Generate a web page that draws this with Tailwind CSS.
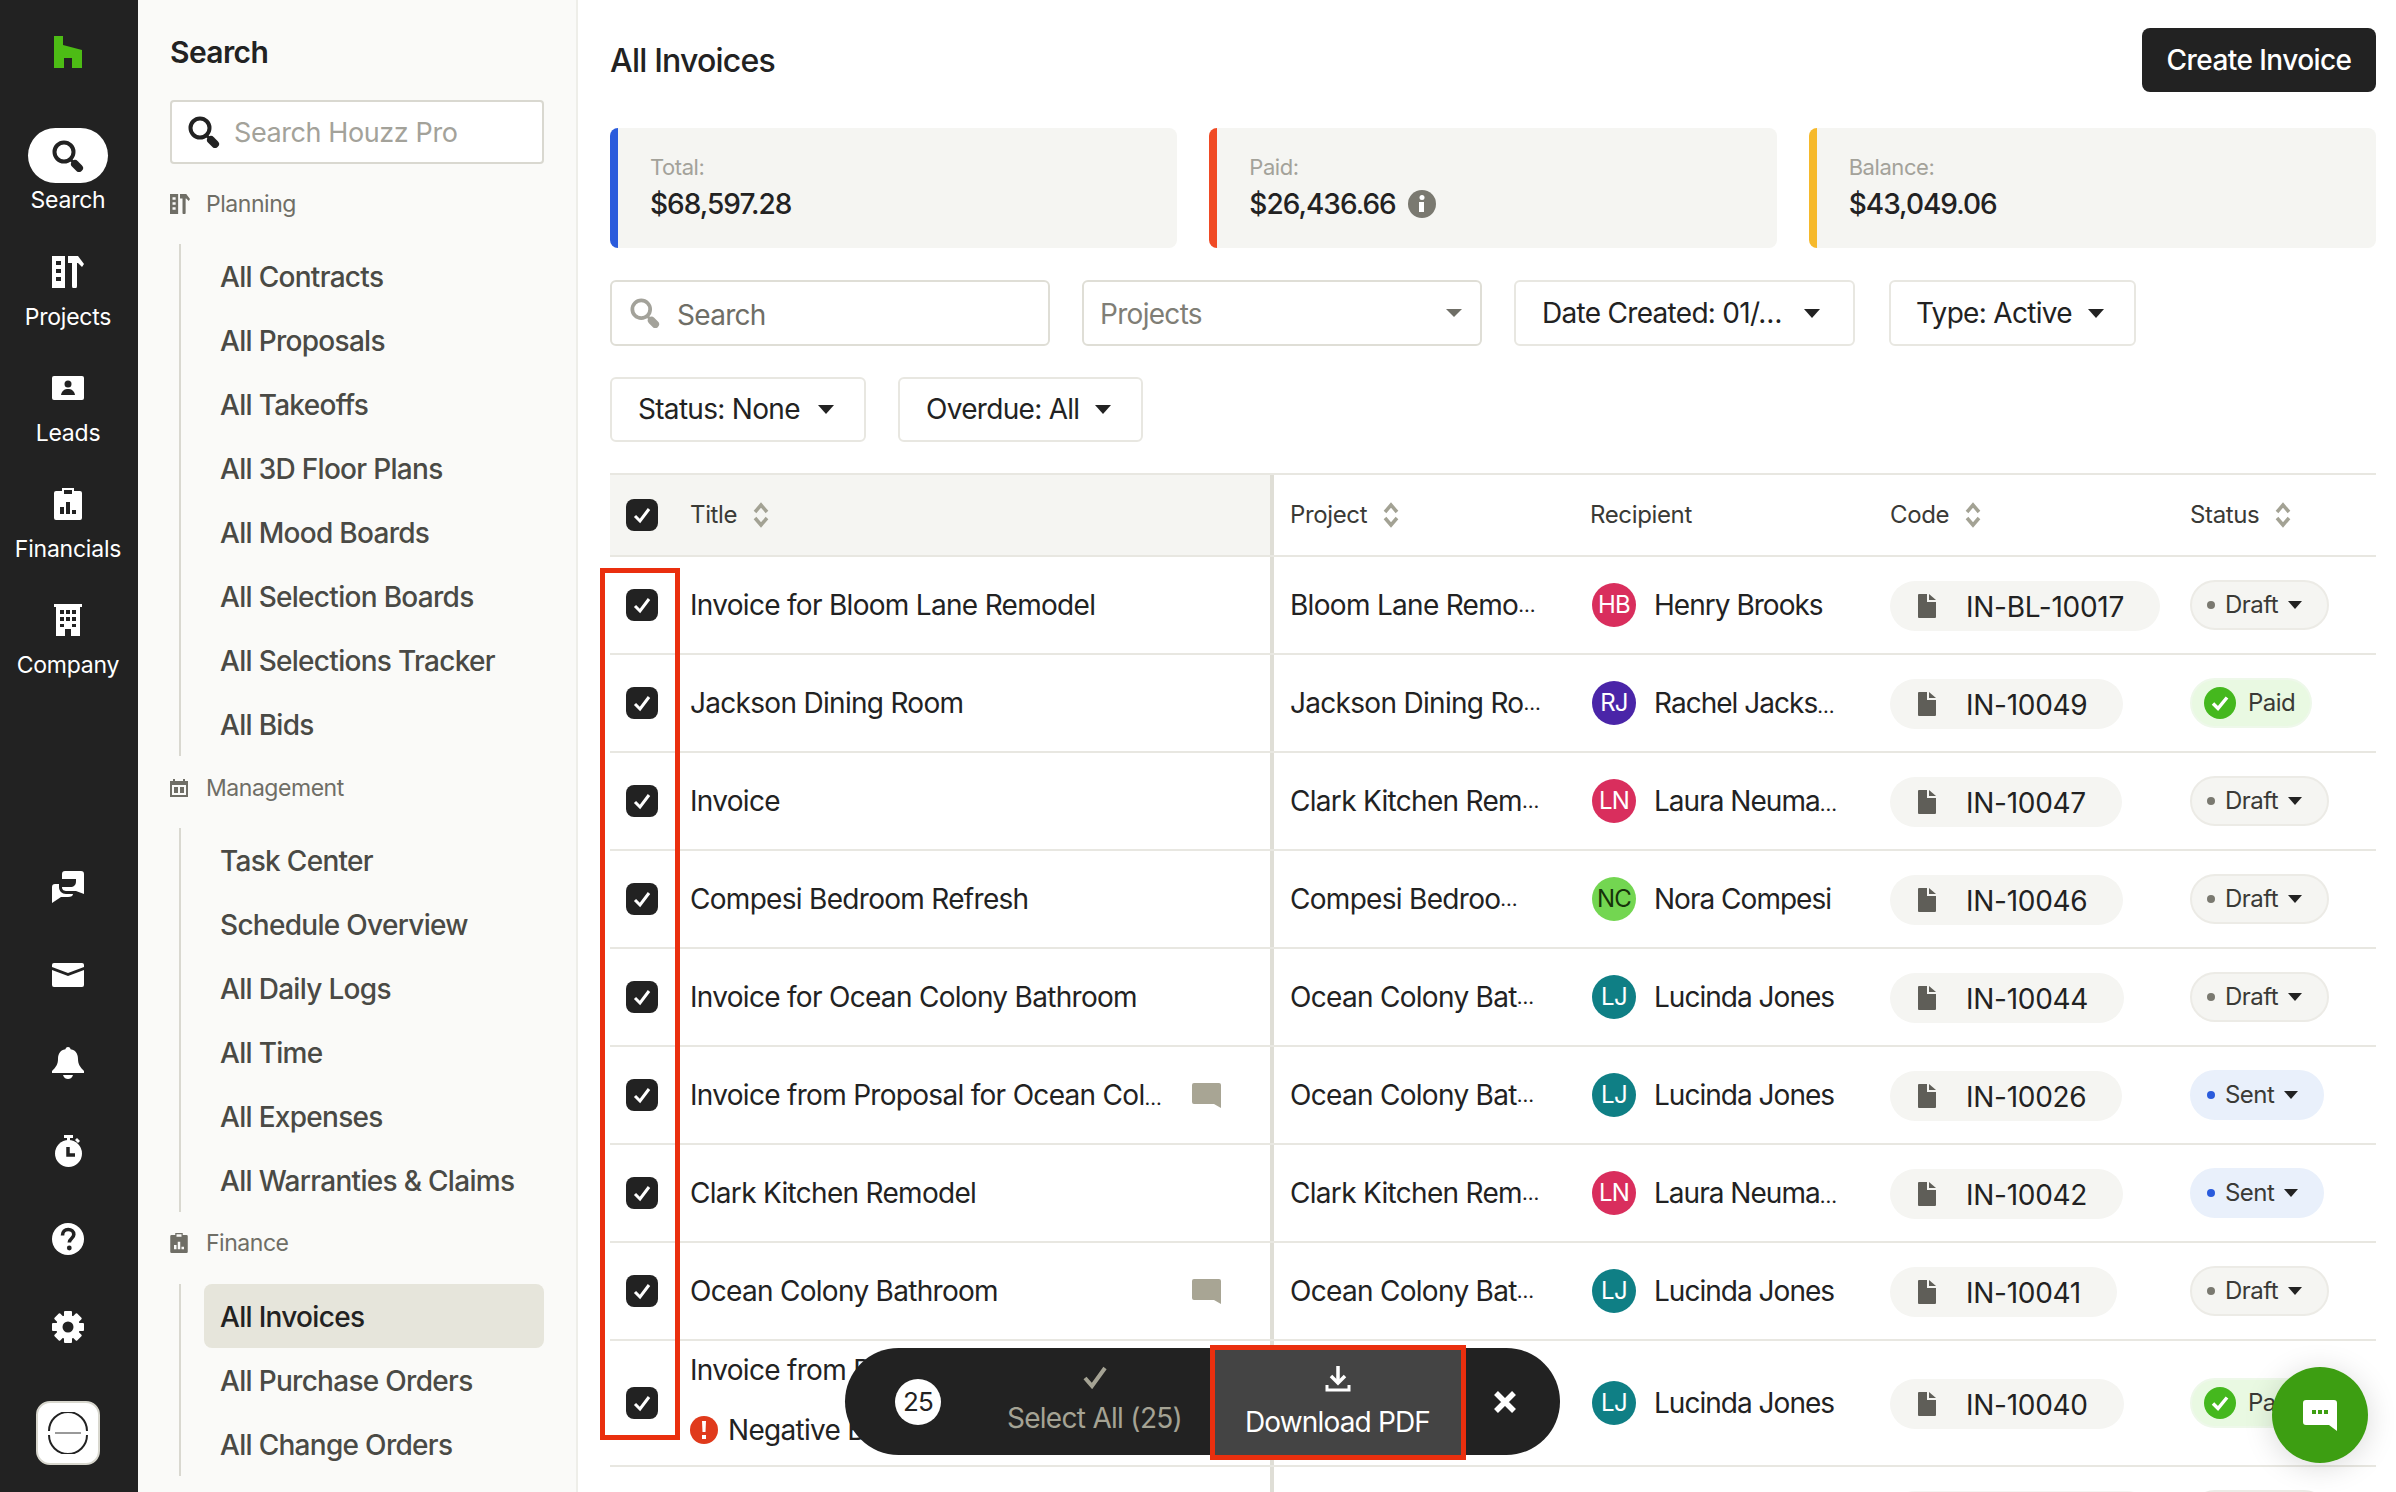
<!DOCTYPE html>
<html lang="en">
<head>
    <meta charset="UTF-8">
    <title>All Invoices</title>
    <script src="https://cdn.jsdelivr.net/npm/@tailwindcss/browser@4"></script>
</head>
<body class="font-['Inter',sans-serif] text-[#222222] bg-white">
<div class="relative flex w-[2396px] h-[1492px] overflow-hidden">

    <!-- icon rail -->
    <aside class="w-[138px] shrink-0 h-full bg-[#222222] flex flex-col items-center text-white pr-[2px]">
        <svg class="mt-[36px] w-[28px] h-[32px]" viewBox="0 0 28 32"><path fill="#4dbc15" d="M0 0h9v9l19 5v18H18V22H10v10H0z"/></svg>
        <div class="mt-[60px] w-full flex flex-col items-center h-[116px]">
            <div class="w-[80px] h-[55px] bg-white rounded-full flex items-center justify-center">
                <svg class="w-[32px] h-[32px]" viewBox="0 0 32 32"><circle cx="12" cy="12" r="9.500" fill="none" stroke="#222" stroke-width="4"/><path d="M18 19l4 4" stroke="#222" stroke-width="3"/><path d="M23 24l4 4" stroke="#222" stroke-width="8" stroke-linecap="round"/></svg>
            </div>
            <span class="mt-[1px] h-[32px] leading-[32px] text-[23px] tracking-[-0.01em]">Search</span>
        </div>
        <div class="w-full flex flex-col items-center h-[116px]">
            <div class="h-[55px] flex items-center justify-center">
                <svg class="w-[32px] h-[32px]" viewBox="0 0 32 32" fill="#fff"><path fill-rule="evenodd" d="M0 0h13v32H0zM4 5v4h5V5zm0 8v4h5v-4zm0 8v4h5v-4z"/><path d="M16 0h10l6 8-2 3-4-4h-1v23a2 2 0 0 1-5 0V7h-4z"/></svg>
            </div>
            <span class="mt-[2px] h-[32px] leading-[32px] text-[23px] tracking-[-0.01em]">Projects</span>
        </div>
        <div class="w-full flex flex-col items-center h-[116px]">
            <div class="h-[55px] flex items-center justify-center">
                <svg class="w-[32px] h-[24px]" viewBox="0 0 32 24"><rect width="32" height="24" rx="2" fill="#fff"/><circle cx="16" cy="8" r="3.500" fill="#222"/><path d="M9 19c1-5 4-6 7-6s6 1 7 6z" fill="#222"/></svg>
            </div>
            <span class="mt-[2px] h-[32px] leading-[32px] text-[23px] tracking-[-0.01em]">Leads</span>
        </div>
        <div class="w-full flex flex-col items-center h-[116px]">
            <div class="h-[55px] flex items-center justify-center">
                <svg class="w-[28px] h-[32px]" viewBox="0 0 28 32" fill="#fff"><path fill-rule="evenodd" d="M8 0h12v3h6a2 2 0 0 1 2 2v25a2 2 0 0 1-2 2H2a2 2 0 0 1-2-2V5a2 2 0 0 1 2-2h6zm2 2v4h8V2zM6 19v7h4v-7zm6-5v12h4V14zm6 8v4h4v-4z"/></svg>
            </div>
            <span class="mt-[2px] h-[32px] leading-[32px] text-[23px] tracking-[-0.01em]">Financials</span>
        </div>
        <div class="w-full flex flex-col items-center h-[116px]">
            <div class="h-[55px] flex items-center justify-center">
                <svg class="w-[28px] h-[32px]" viewBox="0 0 28 32" fill="#fff"><path fill-rule="evenodd" d="M0 0h28v3h-2v29H17v-7h-6v7H2V3H0zM6 6v4h4V6zm6 0v4h4V6zm6 0v4h4V6zM6 13v4h4v-4zm6 0v4h4v-4zm6 0v4h4v-4zM6 20v3h4v-3zm12 0v3h4v-3z"/></svg>
            </div>
            <span class="mt-[2px] h-[32px] leading-[32px] text-[23px] tracking-[-0.01em]">Company</span>
        </div>

        <div class="mt-auto flex flex-col items-center pb-[27px]">
            <div class="h-[88px] flex items-center">
                <svg class="w-[32px] h-[32px]" viewBox="0 0 32 32" fill="#fff"><path d="M10 3a3 3 0 0 1 3-3h16a3 3 0 0 1 3 3v20l-8-3H15c-3 0-5-1-5-4h8c4 0 6-2 6-6V8H10z"/><path d="M0 16a3 3 0 0 1 3-3h4v3c0 4 3 7 7 7h7c0 2-2 3-5 3H9l-9 6z"/></svg>
            </div>
            <div class="h-[88px] flex items-center">
                <svg class="w-[32px] h-[24px]" viewBox="0 0 32 24" fill="#fff"><path d="M0 2a2 2 0 0 1 2-2h28a2 2 0 0 1 2 2v2L16 10 0 4z"/><path d="M0 7l16 6 16-6v15a2 2 0 0 1-2 2H2a2 2 0 0 1-2-2z"/></svg>
            </div>
            <div class="h-[88px] flex items-center">
                <svg class="w-[32px] h-[32px]" viewBox="0 0 32 32" fill="#fff"><circle cx="16" cy="2.500" r="2.500"/><path d="M16 2c7 0 10 4 10 10 0 5 2 8 6 12v2H0v-2c4-4 6-7 6-12 0-6 3-10 10-10z"/><path d="M11 28h10c-1 3-3 4-5 4s-4-1-5-4z"/></svg>
            </div>
            <div class="h-[88px] flex items-center">
                <svg class="w-[27px] h-[32px]" viewBox="0 0 27 32"><path d="M9 0h9v3h-3v4h-3V3H9z" fill="#fff"/><path d="M22 3l3 3-2 2-3-3z" fill="#fff"/><circle cx="13.500" cy="18.500" r="13.500" fill="#fff"/><path d="M13 12v8h7" fill="none" stroke="#222" stroke-width="3.500"/></svg>
            </div>
            <div class="h-[88px] flex items-center">
                <svg class="w-[32px] h-[32px]" viewBox="0 0 32 32"><circle cx="16" cy="16" r="16" fill="#fff"/><path d="M10.500 12.500c0-4 2.500-6 5.700-6s5.600 2 5.600 5c0 4-4.500 4-4.500 8" fill="none" stroke="#222" stroke-width="3.600"/><circle cx="17.300" cy="25" r="2.400" fill="#222"/></svg>
            </div>
            <div class="h-[88px] flex items-center">
                <svg class="w-[32px] h-[32px]" viewBox="0 0 32 32"><g fill="#fff"><rect x="12" y="0" width="8" height="32" rx="1"/><rect x="12" y="0" width="8" height="32" rx="1" transform="rotate(45 16 16)"/><rect x="12" y="0" width="8" height="32" rx="1" transform="rotate(90 16 16)"/><rect x="12" y="0" width="8" height="32" rx="1" transform="rotate(135 16 16)"/><circle cx="16" cy="16" r="12"/></g><circle cx="16" cy="16" r="5.500" fill="#222"/></svg>
            </div>
            <div class="mt-[30px] w-[64px] h-[64px] bg-white rounded-[14px] border-2 border-[#d8d7ce] flex items-center justify-center">
                <svg class="w-[42px] h-[42px]" viewBox="0 0 42 42"><path d="M2 19a19 19 0 0 1 38 0M40 23a19 19 0 0 1-38 0" fill="none" stroke="#222" stroke-width="2"/><rect x="8" y="20" width="26" height="2" fill="#999"/></svg>
            </div>
        </div>
    </aside>

    <!-- secondary nav -->
    <nav class="w-[440px] shrink-0 h-full bg-[#fafaf8] border-r-2 border-[#eeeee9] pl-[32px] pr-[32px] overflow-hidden">
        <h2 class="mt-[32px] h-[40px] leading-[40px] text-[30px] font-semibold tracking-[-0.02em]">Search</h2>
        <div class="mt-[28px] h-[64px] bg-white border-2 border-[#d9d8d0] rounded-[4px] flex items-center pl-[16px]">
            <svg class="w-[32px] h-[32px] shrink-0" viewBox="0 0 32 32"><circle cx="12" cy="12" r="9.500" fill="none" stroke="#222" stroke-width="4"/><path d="M18 19l4 4" stroke="#222" stroke-width="3"/><path d="M23 24l4 4" stroke="#222" stroke-width="8" stroke-linecap="round"/></svg>
            <span class="ml-[14px] mt-[2px] text-[27px] text-[#a3a29a] tracking-[-0.015em]">Search Houzz Pro</span>
        </div>

        <div class="mt-[20px] h-[40px] flex items-center text-[23px] text-[#6f6e66] tracking-[-0.02em]">
            <svg class="w-[20px] h-[20px] mr-[16px]" viewBox="0 0 32 32" fill="#6f6e66"><path fill-rule="evenodd" d="M0 0h13v32H0zM4 5v4h5V5zm0 8v4h5v-4zm0 8v4h5v-4z"/><path d="M16 0h10l6 8-2 3-4-4h-1v23a2 2 0 0 1-5 0V7h-4z"/></svg>
            Planning
        </div>
        <ul class="mt-[20px] ml-[9px] border-l-2 border-[#d9d8d0] text-[28px] font-medium text-[#4a4a45] tracking-[-0.025em]">
            <li class="h-[64px] leading-[66px] ml-[23px] pl-[16px]">All Contracts</li>
            <li class="h-[64px] leading-[66px] ml-[23px] pl-[16px]">All Proposals</li>
            <li class="h-[64px] leading-[66px] ml-[23px] pl-[16px]">All Takeoffs</li>
            <li class="h-[64px] leading-[66px] ml-[23px] pl-[16px]">All 3D Floor Plans</li>
            <li class="h-[64px] leading-[66px] ml-[23px] pl-[16px]">All Mood Boards</li>
            <li class="h-[64px] leading-[66px] ml-[23px] pl-[16px]">All Selection Boards</li>
            <li class="h-[64px] leading-[66px] ml-[23px] pl-[16px]">All Selections Tracker</li>
            <li class="h-[64px] leading-[66px] ml-[23px] pl-[16px]">All Bids</li>
        </ul>

        <div class="mt-[12px] h-[40px] flex items-center text-[23px] text-[#6f6e66] tracking-[-0.02em]">
            <svg class="w-[18px] h-[18px] mr-[18px]" viewBox="0 0 18 18" fill="#6f6e66"><path fill-rule="evenodd" d="M3 0h2v2h8V0h2v2h3v16H0V2h3zM2 6v10h14V6z"/><path d="M4 8h4v6H4zm6 0h4v6h-4z"/></svg>
            Management
        </div>
        <ul class="mt-[20px] ml-[9px] border-l-2 border-[#d9d8d0] text-[28px] font-medium text-[#4a4a45] tracking-[-0.025em]">
            <li class="h-[64px] leading-[66px] ml-[23px] pl-[16px]">Task Center</li>
            <li class="h-[64px] leading-[66px] ml-[23px] pl-[16px]">Schedule Overview</li>
            <li class="h-[64px] leading-[66px] ml-[23px] pl-[16px]">All Daily Logs</li>
            <li class="h-[64px] leading-[66px] ml-[23px] pl-[16px]">All Time</li>
            <li class="h-[64px] leading-[66px] ml-[23px] pl-[16px]">All Expenses</li>
            <li class="h-[64px] leading-[66px] ml-[23px] pl-[16px]">All Warranties &amp; Claims</li>
        </ul>

        <div class="mt-[11px] h-[40px] flex items-center text-[23px] text-[#6f6e66] tracking-[-0.02em]">
            <svg class="w-[18px] h-[20px] mr-[18px]" viewBox="0 0 28 32" fill="#6f6e66"><path fill-rule="evenodd" d="M8 0h12v3h6a2 2 0 0 1 2 2v25a2 2 0 0 1-2 2H2a2 2 0 0 1-2-2V5a2 2 0 0 1 2-2h6zm2 2v4h8V2zM6 19v7h4v-7zm6-5v12h4V14zm6 8v4h4v-4z"/></svg>
            Finance
        </div>
        <ul class="mt-[21px] ml-[9px] border-l-2 border-[#d9d8d0] text-[28px] font-medium text-[#4a4a45] tracking-[-0.025em]">
            <li class="h-[64px] leading-[66px] ml-[23px] pl-[16px] bg-[#e6e5db] rounded-[8px] text-[#222222]">All Invoices</li>
            <li class="h-[64px] leading-[66px] ml-[23px] pl-[16px]">All Purchase Orders</li>
            <li class="h-[64px] leading-[66px] ml-[23px] pl-[16px]">All Change Orders</li>
        </ul>
    </nav>

    <!-- main -->
    <main class="flex-1 min-w-0 pl-[32px] pr-[20px] overflow-hidden">
        <div class="mt-[28px] h-[64px] flex items-center justify-between">
            <h1 class="mt-[2px] text-[32px] font-medium tracking-[-0.025em]">All Invoices</h1>
            <button class="w-[234px] h-[64px] bg-[#222222] text-white rounded-[8px] text-[28px] font-medium tracking-[-0.02em]">Create Invoice</button>
        </div>

        <div class="mt-[36px] grid grid-cols-3 gap-[32px]">
            <div class="h-[120px] bg-[#f5f5f2] rounded-[8px] border-l-[8px] border-[#2a5bdc] pl-[32px] pt-[24px]">
                <div class="h-[30px] leading-[30px] text-[22px] text-[#a3a29a] tracking-[-0.02em]">Total:</div>
                <div class="mt-[4px] text-[28px] leading-[36px] font-medium tracking-[-0.035em]">$68,597.28</div>
            </div>
            <div class="h-[120px] bg-[#f5f5f2] rounded-[8px] border-l-[8px] border-[#f04a24] pl-[32px] pt-[24px]">
                <div class="h-[30px] leading-[30px] text-[22px] text-[#a3a29a] tracking-[-0.02em]">Paid:</div>
                <div class="mt-[4px] flex items-center text-[28px] leading-[36px] font-medium tracking-[-0.035em]">$26,436.66
                    <svg class="ml-[12px] w-[28px] h-[28px]" viewBox="0 0 28 28"><circle cx="14" cy="14" r="14" fill="#7a7970"/><circle cx="14" cy="7.500" r="2.500" fill="#fff"/><path d="M11 12h5v10h-5z" fill="#fff"/></svg>
                </div>
            </div>
            <div class="h-[120px] bg-[#f5f5f2] rounded-[8px] border-l-[8px] border-[#f6b92b] pl-[32px] pt-[24px]">
                <div class="h-[30px] leading-[30px] text-[22px] text-[#a3a29a] tracking-[-0.02em]">Balance:</div>
                <div class="mt-[4px] text-[28px] leading-[36px] font-medium tracking-[-0.035em]">$43,049.06</div>
            </div>
        </div>

        <!-- filters -->
        <div class="mt-[32px] flex h-[66px] text-[28px] tracking-[-0.025em]">
            <div class="w-[440px] border-2 border-[#dfded6] rounded-[6px] flex items-center pl-[18px]">
                <svg class="w-[30px] h-[30px] shrink-0" viewBox="0 0 32 32"><circle cx="12" cy="12" r="9.500" fill="none" stroke="#a3a29a" stroke-width="4"/><path d="M18 19l4 4" stroke="#a3a29a" stroke-width="3"/><path d="M23 24l4 4" stroke="#a3a29a" stroke-width="8" stroke-linecap="round"/></svg>
                <span class="ml-[17px] mt-[3px] text-[#6f6e66]">Search</span>
            </div>
            <div class="ml-[32px] w-[400px] border-2 border-[#dfded6] rounded-[6px] flex items-center justify-between pl-[16px] pr-[18px]">
                <span class="mt-[1px] text-[#7f7e76]">Projects</span>
                <span class="w-0 h-0 border-x-[8px] border-x-transparent border-t-[8px] border-t-[#6f6e66]"></span>
            </div>
            <div class="ml-[32px] w-[341px] border-2 border-[#e8e7e1] rounded-[6px] flex items-center justify-between pl-[26px] pr-[33px]">
                <span>Date Created: 01/…</span>
                <span class="w-0 h-0 border-x-[8px] border-x-transparent border-t-[9px] border-t-[#222222]"></span>
            </div>
            <div class="ml-[34px] w-[247px] border-2 border-[#e8e7e1] rounded-[6px] flex items-center justify-between pl-[25px] pr-[30px]">
                <span>Type: Active</span>
                <span class="w-0 h-0 border-x-[8px] border-x-transparent border-t-[9px] border-t-[#222222]"></span>
            </div>
        </div>
        <div class="mt-[31px] flex h-[65px] text-[28px] tracking-[-0.025em]">
            <div class="w-[256px] border-2 border-[#e8e7e1] rounded-[6px] flex items-center justify-between pl-[26px] pr-[30px]">
                <span class="-mt-[1px]">Status: None</span>
                <span class="w-0 h-0 border-x-[8px] border-x-transparent border-t-[9px] border-t-[#222222]"></span>
            </div>
            <div class="ml-[32px] w-[245px] border-2 border-[#e8e7e1] rounded-[6px] flex items-center justify-between pl-[26px] pr-[30px]">
                <span class="-mt-[1px]">Overdue: All</span>
                <span class="w-0 h-0 border-x-[8px] border-x-transparent border-t-[9px] border-t-[#222222]"></span>
            </div>
        </div>

        <!-- table -->
        <div id="invoiceTable" class="mt-[31px] border-t-2 border-[#e8e7e1]">
            <div class="flex h-[82px] border-b-2 border-[#e8e7e1] text-[24px] text-[#3a3a36] tracking-[-0.015em]">
                <div class="w-[664px] bg-[#f5f5f2] flex items-center pl-[16px] border-r-4 border-[#dfded6]">
                    <span class="w-[32px] h-[32px] bg-[#222222] rounded-[8px] flex items-center justify-center"><svg class="w-[20px] h-[20px]" viewBox="0 0 20 20"><path d="M3 11l5 5 9-12" fill="none" stroke="#fff" stroke-width="3"/></svg></span>
                    <span class="ml-[32px]">Title</span>
                    <svg class="ml-[16px] w-[16px] h-[26px]" viewBox="0 0 16 26"><path d="M2 10l6-7 6 7M2 16l6 7 6-7" fill="none" stroke="#a3a294" stroke-width="3.500"/></svg>
                </div>
                <div class="w-[316px] flex items-center pl-[16px]">Project
                    <svg class="ml-[16px] w-[16px] h-[26px]" viewBox="0 0 16 26"><path d="M2 10l6-7 6 7M2 16l6 7 6-7" fill="none" stroke="#a3a294" stroke-width="3.500"/></svg>
                </div>
                <div class="w-[300px] flex items-center">Recipient</div>
                <div class="w-[300px] flex items-center">Code
                    <svg class="ml-[16px] w-[16px] h-[26px]" viewBox="0 0 16 26"><path d="M2 10l6-7 6 7M2 16l6 7 6-7" fill="none" stroke="#a3a294" stroke-width="3.500"/></svg>
                </div>
                <div class="flex-1 flex items-center">Status
                    <svg class="ml-[16px] w-[16px] h-[26px]" viewBox="0 0 16 26"><path d="M2 10l6-7 6 7M2 16l6 7 6-7" fill="none" stroke="#a3a294" stroke-width="3.500"/></svg>
                </div>
            </div>
            <div id="rows"></div>
        </div>
    </main>

    <!-- red highlight boxes -->
    <div class="absolute left-[600px] top-[568px] w-[80px] h-[872px] border-[5px] border-[#ea2f0e] pointer-events-none"></div>

    <!-- bulk action bar -->
    <div class="absolute left-[845px] top-[1348px] w-[715px] h-[107px] bg-[#222222] rounded-full flex items-stretch">
        <div class="ml-[50px] self-center w-[46px] h-[46px] rounded-full bg-white text-[#222222] text-[26px] flex items-center justify-center tracking-[-0.03em]">25</div>
        <div class="w-[269px] pl-[38px] flex flex-col items-center text-[#a5a394] text-[28px] tracking-[-0.025em]">
            <svg class="mt-[17px] w-[24px] h-[24px]" viewBox="0 0 24 24"><path d="M2 13l7 8L22 3" fill="none" stroke="#a5a394" stroke-width="4"/></svg>
            <span class="mt-[9px] leading-[40px]">Select All (25)</span>
        </div>
        <div class="w-[255px] bg-[#444444] flex flex-col items-center text-white text-[28px] tracking-[-0.03em]">
            <svg class="mt-[17px] w-[28px] h-[28px]" viewBox="0 0 28 28" fill="none" stroke="#fff"><path d="M14 1v15" stroke-width="3.500"/><path d="M7 11l7 7 7-7" stroke-width="3.500"/><path d="M3 20v5h22v-5" stroke-width="3"/></svg>
            <span class="mt-[9px] leading-[40px]">Download PDF</span>
        </div>
        <div class="flex-1 flex items-center justify-center pr-[16px]">
            <svg class="w-[24px] h-[24px]" viewBox="0 0 24 24"><path d="M3 3l18 18M21 3L3 21" stroke="#fff" stroke-width="5.500"/></svg>
        </div>
    </div>
    <div class="absolute left-[1210px] top-[1345px] w-[256px] h-[115px] border-[5px] border-[#ea2f0e] pointer-events-none"></div>

    <!-- chat button -->
    <div class="absolute left-[2272px] top-[1367px] w-[96px] h-[96px] rounded-full bg-[#3d9e12] shadow-[0_4px_30px_rgba(0,0,0,0.15)] flex items-center justify-center">
        <svg class="w-[34px] h-[31px]" viewBox="0 0 34 31"><path fill="#fff" d="M3 0h28a3 3 0 0 1 3 3v28l-8-6H3a3 3 0 0 1-3-3V3a3 3 0 0 1 3-3z"/><path fill="#3d9e12" d="M9 10h4v4H9zm6 0h4v4h-4zm6 0h4v4h-4z"/></svg>
    </div>
</div>

<script>
    const avatarColors = {
        HB: 'bg-[#d92e5d] text-white',
        LN: 'bg-[#d92e5d] text-white',
        RJ: 'bg-[#4a25a8] text-white',
        NC: 'bg-[#73d651] text-[#16330a]',
        LJ: 'bg-[#0f7f85] text-white'
    };
    const invoices = [
        ['Invoice for Bloom Lane Remodel', 0, 'Bloom Lane Remo…', 'HB', 'Henry Brooks', 'IN-BL-10017', 'Draft'],
        ['Jackson Dining Room', 0, 'Jackson Dining Ro…', 'RJ', 'Rachel Jacks…', 'IN-10049', 'Paid'],
        ['Invoice', 0, 'Clark Kitchen Rem…', 'LN', 'Laura Neuma…', 'IN-10047', 'Draft'],
        ['Compesi Bedroom Refresh', 0, 'Compesi Bedroo…', 'NC', 'Nora Compesi', 'IN-10046', 'Draft'],
        ['Invoice for Ocean Colony Bathroom', 0, 'Ocean Colony Bat…', 'LJ', 'Lucinda Jones', 'IN-10044', 'Draft'],
        ['Invoice from Proposal for Ocean Col…', 1, 'Ocean Colony Bat…', 'LJ', 'Lucinda Jones', 'IN-10026', 'Sent'],
        ['Clark Kitchen Remodel', 0, 'Clark Kitchen Rem…', 'LN', 'Laura Neuma…', 'IN-10042', 'Sent'],
        ['Ocean Colony Bathroom', 1, 'Ocean Colony Bat…', 'LJ', 'Lucinda Jones', 'IN-10041', 'Draft'],
        ['Invoice from Proposal', 0, 'Ocean Colony Bat…', 'LJ', 'Lucinda Jones', 'IN-10040', 'Paid'],
        ['', 0, '', '', '', '', 'Draft']
    ];
    const shortDots = (s) => s.replace('…', '<span class="text-[20px] tracking-[-0.02em]">…</span>');

    function statusPill(status) {
        if (status === 'Paid') {
            return `<span class="h-[50px] w-[122px] rounded-full bg-[#e9f9e2] border-2 border-[#eef8ea] flex items-center pl-[12px] text-[24px] text-[#3a3a36]">
                <svg class="w-[32px] h-[32px] shrink-0" viewBox="0 0 32 32"><circle cx="16" cy="16" r="16" fill="#45b81e"/><path d="M9 16.500l5 5 9-11" fill="none" stroke="#fff" stroke-width="3.500"/></svg>
                <span class="ml-[12px]">Paid</span></span>`;
        }
        const sent = status === 'Sent';
        return `<span class="h-[50px] ${sent ? 'w-[134px] bg-[#e9f0fb] border-[#e9f0fb]' : 'w-[139px] bg-[#f5f5f2] border-[#ecebe6]'} rounded-full border-2 flex items-center pl-[15px] text-[24px] text-[#3a3a36]">
            <span class="w-[8px] h-[8px] rounded-full ${sent ? 'bg-[#2a5bdc]' : 'bg-[#7a7970]'}"></span>
            <span class="ml-[10px]">${status}</span>
            <span class="ml-[10px] w-0 h-0 border-x-[7px] border-x-transparent border-t-[8px] border-t-[#222222]"></span></span>`;
    }

    document.getElementById('rows').innerHTML = invoices.map((inv, i) => {
        const [title, hasNote, project, initials, name, code, status] = inv;
        const last = i === 8;
        const titleHtml = last
            ? `<div class="ml-[32px]"><div class="truncate -mt-[6px]">${title}</div>
                <div class="mt-[18px] flex items-center"><svg class="w-[28px] h-[28px] mr-[10px]" viewBox="0 0 28 28"><circle cx="14" cy="14" r="14" fill="#e03a1c"/><path d="M12 5h4l-.500 11h-3zM12 19h4v4h-4z" fill="#fff"/></svg>Negative Balance</div></div>`
            : `<span class="ml-[32px] flex-1">${shortDots(title)}</span>`;
        const note = hasNote
            ? `<svg class="w-[29px] h-[25px] mr-[49px]" viewBox="0 0 29 25"><path fill="#a8a594" d="M2 0h25a2 2 0 0 1 2 2v23l-7-4H2a2 2 0 0 1-2-2V2a2 2 0 0 1 2-2z"/></svg>`
            : '';
        const check = title
            ? `<span class="w-[32px] h-[32px] shrink-0 bg-[#222222] rounded-[8px] flex items-center justify-center"><svg class="w-[20px] h-[20px]" viewBox="0 0 20 20"><path d="M3 11l5 5 9-12" fill="none" stroke="#fff" stroke-width="3"/></svg></span>`
            : '';
        const avatar = initials
            ? `<span class="ml-[2px] w-[44px] h-[44px] rounded-full ${avatarColors[initials]} flex items-center justify-center text-[24px] tracking-[-0.03em]">${initials}</span><span class="ml-[18px] tracking-[-0.035em]">${shortDots(name)}</span>`
            : '';
        const codePill = `<span class="h-[50px] rounded-full bg-[#f5f5f2] flex items-center pl-[28px] pr-[36px] mt-[2px] tracking-[-0.01em]">
            <svg class="w-[18px] h-[24px] shrink-0" viewBox="0 0 18 24"><path fill="#5f5e58" d="M0 1a1 1 0 0 1 1-1h8v8h9v15a1 1 0 0 1-1 1H1a1 1 0 0 1-1-1z"/><path fill="#5f5e58" d="M11 0l7 6h-7z"/></svg>
            <span class="ml-[30px] mt-[2px] ${code ? '' : 'w-[150px]'}">${code}</span></span>`;
        return `<div class="flex ${last ? 'h-[126px]' : 'h-[98px]'} border-b-2 border-[#e8e7e1] text-[28px] tracking-[-0.025em]">
            <div class="w-[664px] flex items-center pl-[16px] border-r-4 border-[#dfded6]">${check}${titleHtml}${note}</div>
            <div class="w-[316px] flex items-center pl-[16px]">${shortDots(project)}</div>
            <div class="w-[300px] flex items-center">${avatar}</div>
            <div class="w-[300px] flex items-center">${codePill}</div>
            <div class="flex-1 flex items-center tracking-[-0.02em]">${statusPill(status)}</div>
        </div>`;
    }).join('');
</script>
</body>
</html>
